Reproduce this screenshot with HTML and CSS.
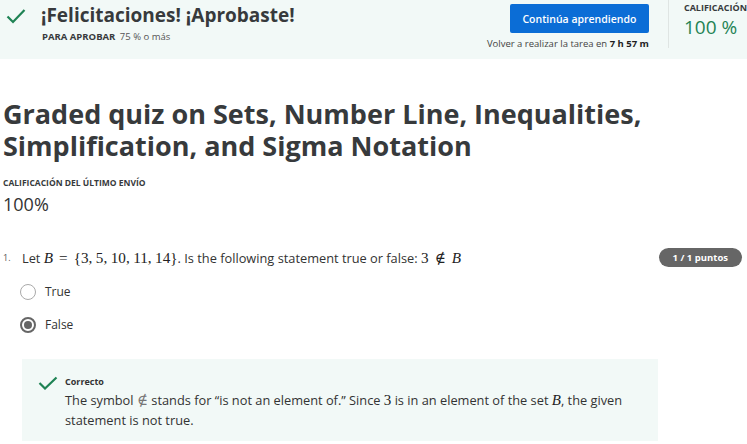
FILE: index.html
```html
<!DOCTYPE html>
<html lang="es">
<head>
<meta charset="utf-8">
<link rel="stylesheet" href="styles.css">
</head>
<body>
<header class="banner">
  <div class="banner-main">
    <svg class="check" width="20" height="16" viewBox="0 0 20 16"><path d="M1.5 8.5 L7 14 L18.5 2" fill="none" stroke="#1f8354" stroke-width="2.2"/></svg>
    <div class="banner-text">
      <h2 class="congrats">¡Felicitaciones! ¡Aprobaste!</h2>
      <div class="pass"><span class="pass-label">PARA APROBAR</span> 75 % o más</div>
    </div>
  </div>
  <div class="banner-actions">
    <button class="btn">Continúa aprendiendo</button>
    <div class="retake">Volver a realizar la tarea en <b>7 h 57 m</b></div>
  </div>
  <div class="divider"></div>
  <div class="grade">
    <div class="grade-label">CALIFICACIÓN</div>
    <div class="grade-value">100 %</div>
  </div>
</header>

<main class="content">
  <h1 class="title">Graded quiz on Sets, Number Line, Inequalities, Simplification, and Sigma Notation</h1>
  <div class="last-label">CALIFICACIÓN DEL ÚLTIMO ENVÍO</div>
  <div class="last-value">100%</div>

  <section class="question">
    <div class="q-row">
      <span class="q-num">1.</span>
      <p class="q-text">Let <span class="m"><i>B</i><span class="rel">=</span>{3,<span class="th"></span>5,<span class="th"></span>10,<span class="th"></span>11,<span class="th"></span>14}</span>. Is the following statement true or false: <span class="m">3<span class="rel">∉</span><i>B</i></span></p>
      <span class="badge">1 / 1 puntos</span>
    </div>
    <div class="options">
      <label class="opt"><span class="radio"></span>True</label>
      <label class="opt"><span class="radio on"></span>False</label>
    </div>
    <div class="feedback">
      <svg class="fcheck" width="20" height="14" viewBox="0 0 20 14"><path d="M1.5 7 L7 12.5 L18.5 1.5" fill="none" stroke="#1f8354" stroke-width="2.2"/></svg>
      <div class="f-body">
        <div class="f-title">Correcto</div>
        <p class="f-text">The symbol <span class="m sym">∉</span> stands for “is not an element of.” Since <span class="m">3</span> is in an element of the set <span class="m"><i>B</i></span>, the given<br>statement is not true.</p>
      </div>
    </div>
  </section>
</main>
</body>
</html>
```
FILE: styles.css
```css
* { box-sizing: border-box; }
body {
  margin: 0;
  font-family: "Open Sans", "Noto Sans", sans-serif;
  color: #1f1f1f;
  background: #fff;
  overflow: hidden;
}
.banner {
  display: flex;
  height: 59px;
  background: #f2f9f7;
}
.banner-main {
  flex: 1;
  display: flex;
  align-items: flex-start;
  padding: 8px 0 0 6px;
}
.banner-text { margin-left: 15px; margin-top: -6px; }
.congrats {
  margin: 0;
  font-size: 19px;
  font-weight: 700;
  color: #373a3c;
  line-height: 26px;
}
.pass { font-size: 9.5px; color: #555; margin-top: 2px; margin-left: 1px; }
.pass-label { font-weight: 700; color: #373a3c; margin-right: 2px; }
.banner-actions {
  display: flex;
  flex-direction: column;
  align-items: flex-end;
  padding-top: 4px;
}
.btn {
  width: 139px;
  height: 29px;
  border: 0;
  border-radius: 2px;
  background: #0b6dd6;
  color: #fff;
  font-family: inherit;
  font-size: 10.5px;
  font-weight: 600;
}
.retake { font-size: 9.5px; color: #444; margin-top: 4px; }
.retake b { color: #1f1f1f; }
.divider {
  width: 1px;
  height: 48px;
  background: #dfe5e3;
  margin-left: 19px;
}
.grade { padding: 2px 0 0 15px; white-space: nowrap; }
.grade-label { font-size: 9px; line-height: 12px; font-weight: 700; color: #373a3c; }
.grade-value { font-size: 19px; color: #1f8354; line-height: 26px; }

.content { padding: 0 0 0 3px; }
.title {
  margin: 39px 0 0;
  font-size: 27px;
  line-height: 32px;
  font-weight: 700;
  color: #373a3c;
  width: 720px;
}
.last-label { font-size: 8.5px; font-weight: 700; color: #373a3c; margin-top: 15px; }
.last-value { font-size: 18px; color: #333; margin-top: 4px; }

.question { margin-top: 32px; }
.q-row { display: flex; align-items: center; }
.q-num { font-size: 9px; color: #555; width: 19px; }
.q-text { margin: 0; flex: 1; font-size: 12.8px; color: #333; }
.m { font-family: "Liberation Serif", "DejaVu Serif", serif; font-size: 15.2px; color: #222; line-height: 1; }
.m i { font-style: italic; }
.rel { display: inline-block; margin: 0 6px; }
.th { display: inline-block; width: 3.5px; }
.sym { color: #777; }
.f-text .m { font-size: 15px; }
.badge {
  background: #666;
  color: #fff;
  font-size: 9.5px;
  font-weight: 700;
  border-radius: 10px;
  padding: 3px 14px;
  margin-right: 5px;
}
.options { padding-left: 17px; margin-top: 8px; }
.opt { display: flex; align-items: center; font-size: 12px; color: #333; height: 33px; }
.radio {
  width: 16px; height: 16px;
  border: 1.5px solid #aaa;
  border-radius: 50%;
  margin-right: 9px;
  position: relative;
}
.radio.on { border-color: #666; border-width: 2px; }
.radio.on::after {
  content: "";
  position: absolute;
  left: 2px; top: 2px;
  width: 8px; height: 8px;
  border-radius: 50%;
  background: #666;
}
.feedback {
  margin: 18px 0 0 19px;
  width: 636px;
  height: 82px;
  background: #f2f9f7;
  display: flex;
  padding: 16px 0 0 16px;
}
.fcheck { margin-top: 1px; }
.f-body { margin-left: 7px; }
.f-title { font-size: 9px; font-weight: 700; color: #333; }
.f-text { margin: 2px 0 0; font-size: 12.8px; line-height: 20px; color: #333; width: 590px; }
```
